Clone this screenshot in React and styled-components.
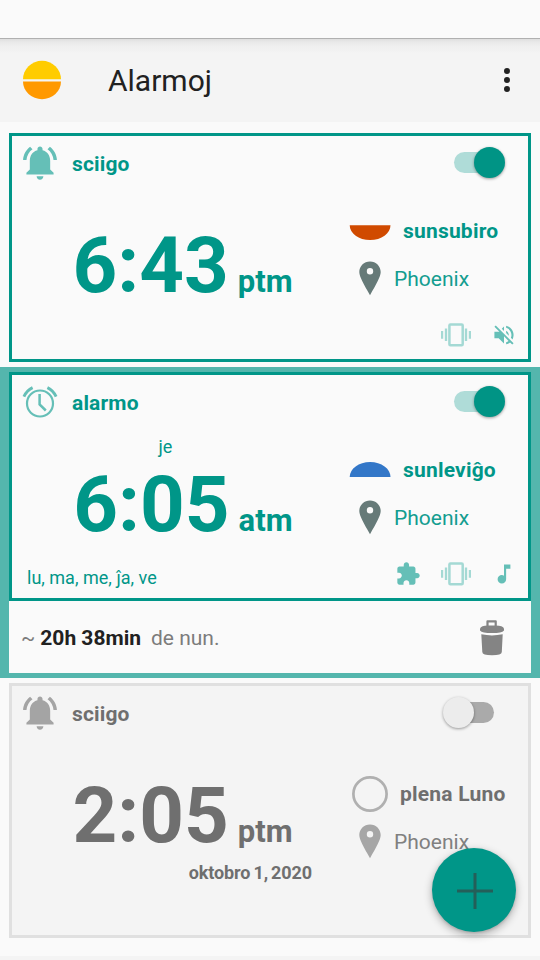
import React from "react";
import styled, { createGlobalStyle } from "styled-components";

const Global = createGlobalStyle`
  * { box-sizing: border-box; }
  html, body { margin: 0; padding: 0; background: #fafafa; }
  body { font-family: Roboto, "Noto Sans", sans-serif; overflow: hidden; }
  svg { display: block; flex: none; }
`;

const Screen = styled.main`
  position: relative;
  width: 540px;
  height: 960px;
  overflow: hidden;
  background: #fafafa;
  display: flex;
  flex-direction: column;
`;

const StatusBar = styled.div`
  height: 39px;
  flex: none;
  border-bottom: 1px solid #b0b0b0;
`;

const AppBar = styled.header`
  height: 83px;
  flex: none;
  display: flex;
  align-items: center;
  padding: 0 21px 1px 22px;
  background: linear-gradient(#dedede, #e9e9e9 3px, #efefef 7px, #f2f2f2 12px, #f4f4f4 14px);
`;

const Title = styled.h1`
  margin: 2px auto 0 46px;
  font-size: 30px;
  line-height: 40px;
  font-weight: 400;
  color: #212121;
`;

const MenuButton = styled.button`
  border: 0;
  padding: 0;
  background: none;
`;

const List = styled.section`
  flex: 1;
  padding-top: 6px;
`;

const Item = styled.article`
  padding: 5px 9px;
  background: ${(p) => (p.$selected ? "#54b6ad" : "transparent")};
`;

const Card = styled.div`
  height: ${(p) => (p.$tall ? 255 : 229)}px;
  border: 3px solid ${(p) => (p.$off ? "#e0e0e0" : "#009688")};
  background: ${(p) => (p.$off ? "#f4f4f4" : "#fafafa")};
  color: ${(p) => (p.$off ? "#6f6f6f" : "#009688")};
  display: flex;
  flex-direction: column;
`;

const CardHeader = styled.div`
  height: 54px;
  flex: none;
  display: flex;
  align-items: center;
  padding: 0 22px 0 10px;
  color: ${(p) => (p.$off ? "#a4a4a4" : "#65bfb7")};
`;

const Kind = styled.h2`
  margin: 2px auto 0 14px;
  font-size: 21px;
  line-height: 28px;
  font-weight: 700;
  letter-spacing: 0.15px;
  color: ${(p) => (p.$off ? "#6f6f6f" : "#009688")};
`;

const Toggle = styled.button`
  width: 64px;
  height: 32px;
  margin-bottom: 1px;
  border: 0;
  padding: 0 1px;
  background: none;
  display: grid;
  align-items: center;
  justify-items: ${(p) => (p.$off ? "start" : "end")};
`;

const Track = styled.span`
  grid-area: 1 / 1;
  justify-self: center;
  width: 40px;
  height: 21px;
  border-radius: 11px;
  background: ${(p) => (p.$off ? "#aaaaaa" : "#afdcd8")};
`;

const Thumb = styled.span`
  grid-area: 1 / 1;
  width: 31px;
  height: 31px;
  border-radius: 50%;
  background: ${(p) => (p.$off ? "#ececec" : "#009485")};
  box-shadow: 0 1px 3px rgba(0, 0, 0, 0.38);
`;

const CardMain = styled.div`
  height: ${(p) => (p.$tall ? 152 : 114)}px;
  flex: none;
  display: flex;
`;

const TimeColumn = styled.div`
  width: 337px;
  flex: none;
  display: flex;
  flex-direction: column;
`;

const Note = styled.div`
  height: 34px;
  width: 307px;
  text-align: center;
  font-size: 18px;
  line-height: 35px;
`;

const Clock = styled.div`
  height: 80px;
  width: 280.500px;
  display: flex;
  align-items: baseline;
  justify-content: flex-end;
  line-height: 84px;
  font-weight: 700;
`;

const Digits = styled.span`
  font-size: 78px;
`;

const Period = styled.span`
  margin-left: 9px;
  font-size: 31px;
`;

const DateLine = styled.div`
  width: 300px;
  text-align: right;
  font-size: 18px;
  line-height: 38px;
  font-weight: 700;
  letter-spacing: -0.1px;
  word-spacing: -1.3px;
`;

const EventColumn = styled.div`
  padding-top: ${(p) => (p.$tall ? 30 : 17)}px;
  flex: 1;
`;

const EventRow = styled.div`
  height: 48px;
  display: flex;
  align-items: center;
  gap: ${(p) => p.$gap}px;
  padding-left: ${(p) => p.$indent}px;
  font-size: 21px;
  font-weight: ${(p) => (p.$strong ? 700 : 400)};
  letter-spacing: ${(p) => (p.$strong ? 0.2 : 0)}px;
  white-space: nowrap;
`;

const Place = styled(EventRow)`
  color: ${(p) => (p.$off ? "#808080" : "#139d90")};
`;

const CardFooter = styled.div`
  height: 55px;
  display: flex;
  align-items: flex-start;
`;

const Days = styled.span`
  margin: 0 auto 0 15px;
  font-size: 18px;
  line-height: 69px;
`;

const Slot = styled.span`
  width: 48px;
  height: 62px;
  display: grid;
  place-items: center;
  color: #65bfb7;
`;

const Remaining = styled.div`
  height: 72px;
  background: #fafafa;
  display: flex;
  align-items: center;
  padding: 1px 26px 0 12px;
  font-size: 21px;
  color: #7c7c7c;
  white-space: pre;
`;

const Strong = styled.strong`
  color: #212121;
  margin: 0 10px 0 5px;
`;

const DeleteButton = styled(MenuButton)`
  margin-left: auto;
`;

const BottomEdge = styled.div`
  height: 4px;
  flex: none;
  background: #f4f4f4;
`;

const Fab = styled.button`
  position: absolute;
  right: 24px;
  bottom: 28px;
  width: 84px;
  height: 84px;
  border: 0;
  padding: 2px 0 0 2px;
  border-radius: 50%;
  background: #009688;
  display: grid;
  place-items: center;
  box-shadow: 0 3px 8px rgba(0, 0, 0, 0.3), 0 1px 3px rgba(0, 0, 0, 0.12);
`;

const Logo = () => (
  <svg width="40" height="40" viewBox="0 -0.500 40 40">
    <path d="M1 18.800a19 18.500 0 0 1 38 0z" fill="#ffcc00" />
    <path d="M1 20.900h38a19 17.800 0 0 1-38 0z" fill="#ff9900" />
  </svg>
);

const Dots = () => (
  <svg width="24" height="26" viewBox="0 0 24 26" fill="#212121">
    <circle cx="12" cy="4" r="3" />
    <circle cx="12" cy="13" r="3" />
    <circle cx="12" cy="22" r="3" />
  </svg>
);

const Bell = () => (
  <svg width="36" height="36" viewBox="1.4 1.6 21.2 21.2" fill="currentColor">
    <path d="M7.58 4.08L6.15 2.65C3.75 4.48 2.17 7.3 2.03 10.5h2c.15-2.65 1.51-4.97 3.55-6.42zM19.97 10.5h2c-.15-3.2-1.73-6.02-4.12-7.85l-1.42 1.43c2.02 1.45 3.39 3.77 3.54 6.42zM18 11c0-3.07-1.64-5.64-4.5-6.32V4c0-.83-.67-1.5-1.5-1.5s-1.5.67-1.5 1.5v.68C7.63 5.36 6 7.92 6 11v5l-2 2v1h16v-1l-2-2v-5zM12 22c1.1 0 2-.9 2-2h-4c0 1.1.89 2 2 2z" />
  </svg>
);

const AlarmClock = () => (
  <svg width="36" height="36" viewBox="0 0 36 36" fill="none" stroke="currentColor" strokeWidth="2.2">
    <circle cx="18" cy="19.5" r="13" />
    <path d="M17.6 10v10.500l6.200 6" strokeWidth="2.500" />
    <path d="M1.900 12.600Q4.800 6.400 10.600 3.600M34.100 12.600Q31.200 6.400 25.400 3.600" strokeWidth="2.900" />
  </svg>
);

const Sunset = () => (
  <svg width="42" height="32" viewBox="0 0 42 32">
    <path d="M.7 10.2h40.8c0 8.2-9.1 14.8-20.4 14.8S.7 18.400.7 10.2z" fill="#d04a00" />
  </svg>
);

const Sunrise = () => (
  <svg width="42" height="32" viewBox="0 0 42 32">
    <path d="M.7 23c0-8.300 9.100-15 20.400-15s20.400 6.700 20.400 15z" fill="#3377c8" />
  </svg>
);

const FullMoon = () => (
  <svg width="36" height="36" viewBox="0 0 36 36">
    <circle cx="18" cy="18" r="16.600" fill="none" stroke="#b0b0b0" strokeWidth="2.700" />
  </svg>
);

const Pin = ({ off }) => (
  <svg width="36" height="36" viewBox="0 0.700 36 36">
    <path
      fillRule="evenodd"
      d="M18 1.200C12 1.200 7.300 5.900 7.300 11.800C7.300 16.500 11.500 23.500 18 35C24.500 23.500 28.700 16.500 28.700 11.800C28.700 5.900 24 1.200 18 1.200zM18 7.700a3.200 3.200 0 1 1 0 6.400a3.200 3.200 0 0 1 0-6.400z"
      fill={off ? "#a6a6a6" : "#667a78"}
    />
  </svg>
);

const Vibrate = () => (
  <svg width="30" height="24" viewBox="0 0 30 24" fill="none" stroke="#a4d9d4">
    <rect x="8.400" y="1.400" width="13.300" height="20.900" rx="1" strokeWidth="2.500" />
    <path d="M5 5.500v12.500M25 5.500v12.500" strokeWidth="2.300" />
    <path d="M1.100 8v7.700M28.900 8v7.700" strokeWidth="2.200" />
  </svg>
);

const glyphs = {
  muted:
    "M16.5 12c0-1.770-1.020-3.290-2.500-4.030v2.210l2.450 2.450c.03-.2.050-.41.050-.63zm2.500 0c0 .94-.2 1.820-.54 2.640l1.510 1.510C20.630 14.910 21 13.500 21 12c0-4.280-2.990-7.860-7-8.770v2.060c2.890.86 5 3.540 5 6.710zM4.270 3L3 4.270 7.730 9H3v6h4l5 5v-6.730l4.250 4.250c-.67.52-1.420.93-2.250 1.180v2.060c1.380-.31 2.630-.95 3.690-1.810L19.730 21 21 19.730l-9-9L4.270 3zM12 4L9.910 6.090 12 8.180V4z",
  note: "M12 3v10.550c-.59-.34-1.270-.55-2-.55-2.210 0-4 1.790-4 4s1.790 4 4 4 4-1.790 4-4V7h4V3h-6z",
  puzzle:
    "M20.500 11H19V7c0-1.100-.9-2-2-2h-4V3.500C13 2.120 11.880 1 10.500 1S8 2.120 8 3.500V5H4c-1.100 0-1.990.9-1.990 2v3.800H3.500c1.490 0 2.700 1.210 2.700 2.700s-1.210 2.700-2.700 2.700H2V20c0 1.100.9 2 2 2h3.800v-1.500c0-1.490 1.210-2.700 2.700-2.700 1.490 0 2.700 1.210 2.700 2.700V22H17c1.100 0 2-.9 2-2v-4h1.500c1.380 0 2.500-1.120 2.500-2.500S21.880 11 20.500 11z",
};

const Glyph = ({ name }) => (
  <svg width="26" height="26" viewBox="-.2 -.2 24.400 24.400" fill="currentColor">
    <path d={glyphs[name]} />
  </svg>
);

const Trash = () => (
  <svg width="26" height="36" viewBox="0 0 26 36" fill="#848484">
    <path d="M7.400 6V1.200Q7.400.2 8.400.2h8.400q1 0 1 1V6h-2.200V2.500H9.600V6z" />
    <path d="M1 8.600Q2 5.400 9 5.400h7.500Q24 5.400 25 8.600v1.800Q23 13 13 13T1 10.400z" />
    <path d="M2.300 14.300Q13 16.500 23.700 14.300L22.800 32Q22.700 35.200 13 35.200T3.300 32z" />
  </svg>
);

const Plus = () => (
  <svg width="36" height="36" viewBox="0 0 36 36">
    <path d="M18 0v36M0 18h36" stroke="#245f59" strokeWidth="3" />
  </svg>
);

const alarms = [
  {
    kind: "sciigo", Icon: Bell, time: "6:43", period: "ptm",
    event: "sunsubiro", EventIcon: Sunset, indent: 0, icons: ["vibrate", "muted"],
  },
  {
    kind: "alarmo", Icon: AlarmClock, note: "je", time: "6:05", period: "atm",
    event: "sunleviĝo", EventIcon: Sunrise, indent: 0,
    days: "lu, ma, me, ĵa, ve", icons: ["puzzle", "vibrate", "note"], selected: true,
  },
  {
    kind: "sciigo", Icon: Bell, time: "2:05", period: "ptm", date: "oktobro 1, 2020",
    event: "plena Luno", EventIcon: FullMoon, indent: 3, off: true,
  },
];

function AlarmItem({ alarm }) {
  const { off, selected, Icon, EventIcon } = alarm;
  const tall = Boolean(alarm.date);
  return (
    <Item $selected={selected}>
      <Card $off={off} $tall={tall}>
        <CardHeader $off={off}>
          <Icon />
          <Kind $off={off}>{alarm.kind}</Kind>
          <Toggle $off={off}>
            <Track $off={off} />
            <Thumb $off={off} />
          </Toggle>
        </CardHeader>
        <CardMain $tall={tall}>
          <TimeColumn>
            <Note>{alarm.note}</Note>
            <Clock>
              <Digits>{alarm.time}</Digits>
              <Period>{alarm.period}</Period>
            </Clock>
            {alarm.date && <DateLine>{alarm.date}</DateLine>}
          </TimeColumn>
          <EventColumn $tall={tall}>
            <EventRow $strong $gap={12} $indent={alarm.indent}>
              <EventIcon />
              <span>{alarm.event}</span>
            </EventRow>
            <Place $gap={6} $indent={3} $off={off}>
              <Pin off={off} />
              <span>Phoenix</span>
            </Place>
          </EventColumn>
        </CardMain>
        {alarm.icons && (
          <CardFooter>
            <Days>{alarm.days}</Days>
            {alarm.icons.map((name) => (
              <Slot key={name}>{name === "vibrate" ? <Vibrate /> : <Glyph name={name} />}</Slot>
            ))}
          </CardFooter>
        )}
      </Card>
      {selected && (
        <Remaining>
          <span>~</span>
          <Strong>20h 38min</Strong>
          <span>de nun.</span>
          <DeleteButton aria-label="forigi">
            <Trash />
          </DeleteButton>
        </Remaining>
      )}
    </Item>
  );
}

export default function App() {
  return (
    <Screen>
      <Global />
      <StatusBar />
      <AppBar>
        <Logo />
        <Title>Alarmoj</Title>
        <MenuButton aria-label="menuo">
          <Dots />
        </MenuButton>
      </AppBar>
      <List>
        {alarms.map((alarm) => (
          <AlarmItem key={alarm.time} alarm={alarm} />
        ))}
      </List>
      <BottomEdge />
      <Fab aria-label="aldoni">
        <Plus />
      </Fab>
    </Screen>
  );
}
